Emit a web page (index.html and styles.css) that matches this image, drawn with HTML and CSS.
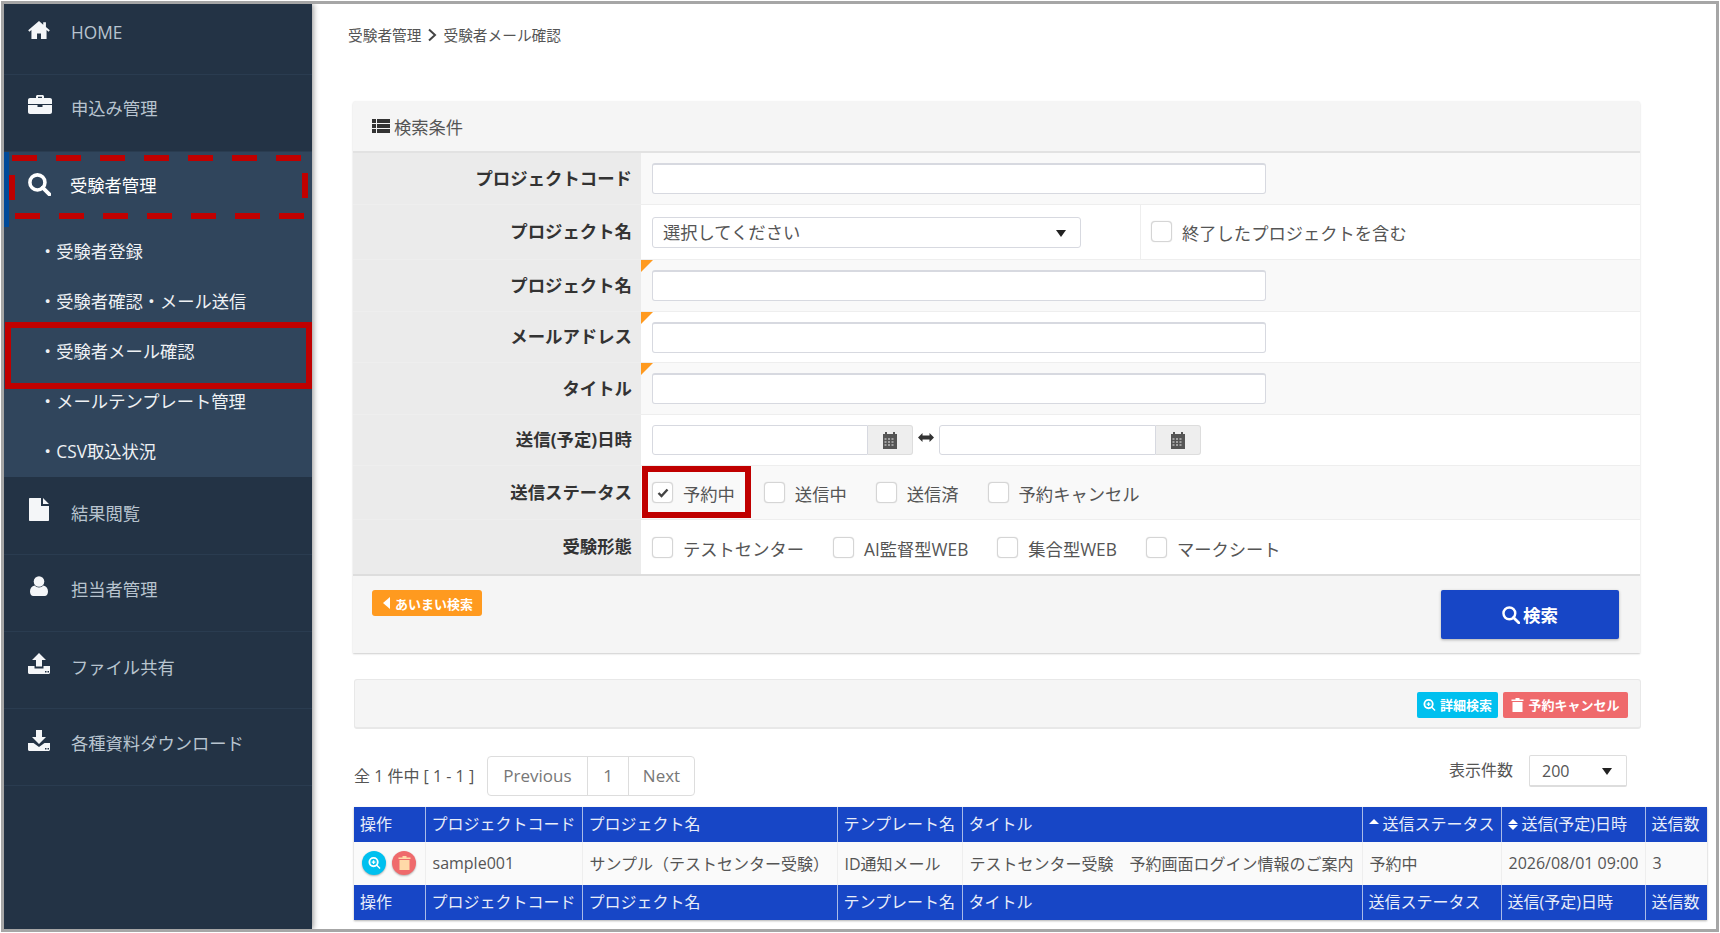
FILE: index.html
```html
<!DOCTYPE html>
<html lang="ja">
<head>
  <meta charset="UTF-8" />
  <title>受験者メール確認</title>
  <link rel="stylesheet" href="styles.css">
</head>
<body>
<div class="frame">
  <aside class="sidebar">
    <a class="nav-item nav-home">
      <svg class="nav-icon icon-home" viewBox="0 0 24 20"><path d="M12 0 0 10.4l1.3 1.5L3.600 10v10h6.200v-6h4.400v6h6.200V10l2.300 1.900 1.300-1.500-4.300-3.700V1.500h-3v2.700z"/></svg>
      <span>HOME</span>
    </a>
    <a class="nav-item">
      <svg class="nav-icon icon-case" viewBox="0 0 24 19"><path fill-rule="evenodd" d="M8 3V1.500C8 .7 8.700 0 9.500 0h5c.8 0 1.500.7 1.500 1.500V3h6c1.100 0 2 .9 2 2v4H0V5c0-1.100.9-2 2-2zm2-1.200V3h4V1.800z"/><path d="M0 10h9.500v2h5v-2H24v7c0 1.100-.9 2-2 2H2c-1.100 0-2-.9-2-2z"/></svg>
      <span>申込み管理</span>
    </a>
    <div class="nav-section">
      <a class="nav-item nav-active">
        <svg class="nav-icon icon-search" viewBox="0 0 22 22"><circle cx="9" cy="9" r="7.200" fill="none" stroke="#fff" stroke-width="3.400"/><path d="m14 14 6.500 6.500" stroke="#fff" stroke-width="3.600" stroke-linecap="round"/></svg>
        <span>受験者管理</span>
        <svg class="dash-box" width="299" height="64"><rect x="3" y="3" width="293" height="58" fill="none" stroke="#c00000" stroke-width="6" stroke-dasharray="25 19" shape-rendering="crispEdges"/></svg>
      </a>
      <a class="sub-item">・受験者登録</a>
      <a class="sub-item">・受験者確認・メール送信</a>
      <a class="sub-item sub-marked">・受験者メール確認</a>
      <a class="sub-item">・メールテンプレート管理</a>
      <a class="sub-item">・CSV取込状況</a>
    </div>
    <a class="nav-item nav-result">
      <svg class="nav-icon icon-file" viewBox="0 0 20 23"><path d="M1 0h11v8h8v14c0 .6-.4 1-1 1H1c-.6 0-1-.4-1-1V1c0-.6.4-1 1-1zM14 0l6 6h-6z"/></svg>
      <span>結果閲覧</span>
    </a>
    <a class="nav-item nav-staff">
      <svg class="nav-icon icon-user" viewBox="0 0 18 20"><circle cx="9" cy="5.500" r="5.300"/><path d="M0 15.500c0-3.500 1.800-5.500 4.600-6 1.100 1.300 2.700 2 4.400 2s3.300-.7 4.400-2c2.800.5 4.600 2.500 4.600 6 0 2.700-1.200 4.500-3.400 4.500H3.400C1.200 20 0 18.200 0 15.500z"/></svg>
      <span>担当者管理</span>
    </a>
    <a class="nav-item nav-share">
      <svg class="nav-icon icon-tray" viewBox="0 0 22 21"><path d="m11 0 7 7h-4v6.500H8V7H4z"/><path fill-rule="evenodd" d="M0 13h6.500v2.500h9V13H22v6.500c0 .8-.7 1.500-1.500 1.500h-19C.7 21 0 20.300 0 19.500zm17 5v1.500h1.500V18zm2.500 0v1.500H21V18z"/></svg>
      <span>ファイル共有</span>
    </a>
    <a class="nav-item nav-staff">
      <svg class="nav-icon icon-tray" viewBox="0 0 22 21"><path d="M8 0h6v7h4l-7 7-7-7h4z"/><path fill-rule="evenodd" d="M0 13h5.500L11 17l5.500-4H22v6.500c0 .8-.7 1.500-1.500 1.500h-19C.7 21 0 20.300 0 19.500zm17 5v1.500h1.500V18zm2.500 0v1.500H21V18z"/></svg>
      <span>各種資料ダウンロード</span>
    </a>
  </aside>

  <main class="content">
    <div class="crumbs">
      <span>受験者管理</span>
      <svg class="crumb-sep" viewBox="0 0 10 14"><path d="m2 1.500 6 5.500-6 5.500" fill="none" stroke="#444" stroke-width="2"/></svg>
      <span>受験者メール確認</span>
    </div>

    <section class="panel">
      <div class="panel-head">
        <svg class="list-icon" viewBox="0 0 18 14"><path d="M0 0h4v4H0zm5 0h13v4H5zM0 5h4v4H0zm5 0h13v4H5zM0 10h4v4H0zm5 0h13v4H5z"/></svg>
        <span>検索条件</span>
      </div>

      <div class="form-row row-a">
        <div class="form-label">プロジェクトコード</div>
        <div class="form-cell"><div class="text-input"></div></div>
      </div>
      <div class="form-row row-b">
        <div class="form-label">プロジェクト名</div>
        <div class="form-cell cell-select">
          <div class="select-box">選択してください<i class="caret"></i></div>
        </div>
        <div class="form-cell cell-side">
          <label class="check"><i class="box"></i>終了したプロジェクトを含む</label>
        </div>
      </div>
      <div class="form-row row-c">
        <div class="form-label">プロジェクト名</div>
        <div class="form-cell cell-fuzzy"><div class="text-input"></div></div>
      </div>
      <div class="form-row row-d">
        <div class="form-label">メールアドレス</div>
        <div class="form-cell cell-fuzzy"><div class="text-input"></div></div>
      </div>
      <div class="form-row row-c">
        <div class="form-label">タイトル</div>
        <div class="form-cell cell-fuzzy"><div class="text-input"></div></div>
      </div>
      <div class="form-row row-d">
        <div class="form-label">送信(予定)日時</div>
        <div class="form-cell">
          <div class="date-input"></div>
          <div class="date-addon"><svg class="cal-icon" viewBox="0 0 14 17"><path fill-rule="evenodd" d="M2 0h2v2h6V0h2v2h2v15H0V2h2zM1.500 6.500v1h2v-1zm3.500 0v1h2v-1zm3.500 0v1h2v-1zM1.500 9.500v1h2v-1zm3.500 0v1h2v-1zm3.500 0v1h2v-1zM1.500 12.500v1h2v-1zm3.500 0v1h2v-1zm3.500 0v1h2v-1z"/></svg></div>
          <svg class="range-icon" viewBox="0 0 16 9"><path d="M0 4.500 4.500 0v2.500h7V0L16 4.500 11.500 9V6.500h-7V9z"/></svg>
          <div class="date-input date-end"></div>
          <div class="date-addon"><svg class="cal-icon" viewBox="0 0 14 17"><path fill-rule="evenodd" d="M2 0h2v2h6V0h2v2h2v15H0V2h2zM1.500 6.500v1h2v-1zm3.500 0v1h2v-1zm3.500 0v1h2v-1zM1.500 9.500v1h2v-1zm3.500 0v1h2v-1zm3.500 0v1h2v-1zM1.500 12.500v1h2v-1zm3.500 0v1h2v-1zm3.500 0v1h2v-1z"/></svg></div>
        </div>
      </div>
      <div class="form-row row-status">
        <div class="form-label">送信ステータス</div>
        <div class="form-cell checks">
          <label class="check check-marked"><i class="box"><svg class="tick" viewBox="0 0 12 10"><path d="m1.500 5 3 3 6-6.500" fill="none" stroke="#444" stroke-width="2.400"/></svg></i>予約中</label>
          <label class="check"><i class="box"></i>送信中</label>
          <label class="check"><i class="box"></i>送信済</label>
          <label class="check"><i class="box"></i>予約キャンセル</label>
        </div>
      </div>
      <div class="form-row row-type">
        <div class="form-label">受験形態</div>
        <div class="form-cell checks">
          <label class="check"><i class="box"></i>テストセンター</label>
          <label class="check"><i class="box"></i>AI監督型WEB</label>
          <label class="check"><i class="box"></i>集合型WEB</label>
          <label class="check"><i class="box"></i>マークシート</label>
        </div>
      </div>

      <div class="panel-foot">
        <a class="btn-fuzzy"><i class="left-caret"></i>あいまい検索</a>
        <a class="btn-search">
          <svg class="btn-search-icon" viewBox="0 0 22 22"><circle cx="9" cy="9" r="7.200" fill="none" stroke="#fff" stroke-width="3"/><path d="m14 14 6.500 6.500" stroke="#fff" stroke-width="3.400" stroke-linecap="round"/></svg>
          検索
        </a>
      </div>
    </section>

    <div class="action-bar">
      <a class="btn-small btn-info">
        <svg class="small-icon" viewBox="0 0 14 14"><circle cx="6" cy="6" r="4.500" fill="none" stroke="#fff" stroke-width="2"/><path d="m9.500 9.500 3.500 3.500M4 6h4M6 4v4" stroke="#fff" stroke-width="1.500"/></svg>
        詳細検索
      </a>
      <a class="btn-small btn-danger">
        <svg class="small-icon" viewBox="0 0 12 14"><path d="M4 0h4v1.500h4V3H0V1.500h4zM1 4h10v10H1z" fill="#fff"/></svg>
        予約キャンセル
      </a>
    </div>

    <div class="list-tools">
      <div class="list-count">全 1 件中 [ 1 - 1 ]</div>
      <div class="pager">
        <a class="pager-prev">Previous</a>
        <a class="pager-num">1</a>
        <a class="pager-next">Next</a>
      </div>
      <div class="per-page">表示件数</div>
      <div class="per-select">200<i class="caret"></i></div>
    </div>

    <table class="result">
      <colgroup>
        <col class="c-op"><col class="c-code"><col class="c-name"><col class="c-tpl"><col class="c-title"><col class="c-status"><col class="c-date"><col class="c-count">
      </colgroup>
      <thead>
        <tr>
          <th>操作</th>
          <th>プロジェクトコード</th>
          <th>プロジェクト名</th>
          <th>テンプレート名</th>
          <th>タイトル</th>
          <th class="sorted"><i class="sort-up"></i>送信ステータス</th>
          <th class="sorted"><i class="sort-both"></i>送信(予定)日時</th>
          <th>送信数</th>
        </tr>
      </thead>
      <tbody>
        <tr>
          <td class="op-cell">
            <a class="round-btn round-info"><svg viewBox="0 0 14 14"><circle cx="6" cy="6" r="4.500" fill="none" stroke="#fff" stroke-width="2"/><path d="m9.500 9.500 3.500 3.500M4 6h4M6 4v4" stroke="#fff" stroke-width="1.500"/></svg></a>
            <a class="round-btn round-danger"><svg viewBox="0 0 12 14"><path d="M4 0h4v1.500h4V3H0V1.500h4zM1 4h10v10H1z" fill="#ffd9a8"/></svg></a>
          </td>
          <td>sample001</td>
          <td>サンプル（テストセンター受験）</td>
          <td>ID通知メール</td>
          <td>テストセンター受験　予約画面ログイン情報のご案内</td>
          <td>予約中</td>
          <td>2026/08/01 09:00</td>
          <td>3</td>
        </tr>
      </tbody>
      <tfoot>
        <tr>
          <th>操作</th>
          <th>プロジェクトコード</th>
          <th>プロジェクト名</th>
          <th>テンプレート名</th>
          <th>タイトル</th>
          <th>送信ステータス</th>
          <th>送信(予定)日時</th>
          <th>送信数</th>
        </tr>
      </tfoot>
    </table>
  </main>
</div>
</body>
</html>
```

FILE: styles.css
```css
* {
  box-sizing: border-box;
}
html, body {
  height: 100%;
}
body {
  margin: 0;
  padding: 1px;
  background: #fff;
  color: #555;
  font-family: "Open Sans", "Noto Sans CJK JP", sans-serif;
  font-size: 17.300px;
  overflow: hidden;
}
i {
  font-style: normal;
}
.frame {
  display: flex;
  height: 931px;
  border: 3px solid #a6a6a6;
  overflow: hidden;
  background: #fff;
}

/* sidebar */
.sidebar {
  flex: 0 0 308px;
  background: #233345;
  box-shadow: 1px 0 6px rgba(0,0,0,0.45);
  color: #b8c4cf;
  z-index: 2;
}
.nav-item {
  position: relative;
  display: flex;
  align-items: flex-start;
  height: 77px;
  padding: 21px 0 0 24px;
  border-bottom: 1px solid #2a3c50;
  line-height: 26px;
}
.nav-item span {
  position: absolute;
  left: 67px;
  top: 21px;
}
.nav-home {
  height: 71px;
  padding-top: 17px;
}
.nav-home span {
  top: 16px;
}
.nav-result {
  height: 78px;
}
.nav-result span {
  top: 24px;
}
.nav-staff span {
  top: 22px;
}
.nav-share span {
  top: 23px;
}
.nav-icon {
  display: block;
  fill: #f4f6f8;
}
.icon-home {
  width: 22px;
  height: 18px;
}
.icon-case {
  width: 24px;
  height: 19px;
  margin-top: -1px;
}
.icon-search {
  width: 23px;
  height: 23px;
}
.icon-file {
  width: 20px;
  height: 23px;
  margin-left: 1px;
}
.icon-user {
  width: 18px;
  height: 20px;
  margin-left: 2px;
}
.icon-tray {
  width: 22px;
  height: 21px;
}
.nav-section {
  background: #30455c;
}
.nav-active {
  height: 75px;
  border-bottom: 0;
  color: #fff;
}
.nav-active span {
  left: 66px;
}
.nav-active::before {
  content: "";
  position: absolute;
  left: 0;
  top: 0;
  bottom: 0;
  width: 5px;
  background: #004a99;
}
.dash-box {
  position: absolute;
  left: 5px;
  top: 3px;
}
.sub-item {
  position: relative;
  display: block;
  height: 50px;
  padding-left: 35px;
  line-height: 50px;
  color: #eef1f4;
}
.sub-marked::after {
  content: "";
  position: absolute;
  left: 1px;
  right: 0;
  top: -5px;
  bottom: -12px;
  border: 6px solid #c00000;
}

/* main */
.content {
  flex: 1;
  padding: 0 9px 0 36px;
  min-width: 0;
}
.crumbs {
  display: flex;
  align-items: center;
  gap: 6px;
  height: 97px;
  padding-bottom: 36px;
  font-size: 14.700px;
  color: #555;
}
.crumb-sep {
  width: 10px;
  height: 14px;
}
.panel {
  width: 1287px;
  margin-left: 5px;
  background: #f5f5f5;
  box-shadow: 0 1px 2px rgba(0,0,0,0.2);
  border-radius: 3px 3px 0 0;
}
.panel-head {
  display: flex;
  align-items: center;
  gap: 4px;
  height: 52px;
  padding-left: 19px;
  border-bottom: 2px solid #e2e2e2;
  color: #555;
}
.list-icon {
  width: 18px;
  height: 14px;
  fill: #333;
}
.form-row {
  display: flex;
  border-bottom: 1px solid #eee;
  background: #fff;
}
.row-a {
  height: 52px;
  background: #f9f9f9;
}
.row-b {
  height: 55px;
}
.row-c {
  height: 52px;
  background: #f9f9f9;
}
.row-d {
  height: 51px;
}
.row-status {
  height: 54px;
  background: #f9f9f9;
}
.row-type {
  height: 56px;
  border-bottom: 2px solid #ddd;
}
.form-label {
  flex: 0 0 288px;
  display: flex;
  align-items: center;
  justify-content: flex-end;
  padding: 0 9px 3px 0;
  background: #ebebeb;
  color: #333;
  font-size: 17.400px;
  font-weight: 700;
}
.form-cell {
  position: relative;
  display: flex;
  align-items: center;
  flex: 1;
  padding-left: 11px;
}
.cell-fuzzy::before {
  content: "";
  position: absolute;
  left: 0;
  top: 0;
  border-top: 12px solid #ff9a1f;
  border-right: 12px solid transparent;
}
.text-input {
  width: 614px;
  height: 31px;
  background: #fff;
  border: 1px solid #d7d9e0;
  border-top-width: 2px;
  border-radius: 3px;
}
.cell-select {
  flex: 0 0 499px;
}
.select-box {
  position: relative;
  width: 429px;
  height: 31px;
  padding-left: 10px;
  line-height: 30px;
  background: #fff;
  border: 1px solid #d7d9e0;
  border-radius: 3px;
}
.caret {
  position: absolute;
  right: 14px;
  top: 12px;
  border-top: 7px solid #222;
  border-left: 5px solid transparent;
  border-right: 5px solid transparent;
}
.cell-side {
  padding-left: 10px;
  border-left: 1px solid #eee;
}
.date-input {
  width: 216px;
  height: 30px;
  background: #fff;
  border: 1px solid #d7d9e0;
  border-radius: 3px 0 0 3px;
}
.date-end {
  width: 217px;
}
.date-addon {
  display: flex;
  align-items: center;
  justify-content: center;
  width: 45px;
  height: 30px;
  background: #eee;
  border: 1px solid #ddd;
  border-left: 0;
  border-radius: 0 3px 3px 0;
}
.cal-icon {
  width: 14px;
  height: 17px;
  fill: #555;
}
.range-icon {
  width: 16px;
  height: 9px;
  margin: -6px 5px 0;
  fill: #333;
}
.checks {
  gap: 29px;
  padding-top: 2px;
}
.check {
  position: relative;
  display: flex;
  align-items: center;
  gap: 10px;
  color: #555;
  white-space: nowrap;
}
.box {
  display: flex;
  align-items: center;
  justify-content: center;
  width: 21px;
  height: 21px;
  margin-top: -2px;
  background: #fff;
  border: 1px solid #d5d5d5;
  border-radius: 4px;
  box-shadow: 0 0 1px #ccc;
}
.tick {
  width: 12px;
  height: 10px;
}
.check-marked::after {
  content: "";
  position: absolute;
  left: -10px;
  right: -16px;
  top: -15px;
  bottom: -12px;
  border: 6px solid #c00000;
}
.panel-foot {
  display: flex;
  justify-content: space-between;
  align-items: flex-start;
  height: 77px;
  padding: 14px 21px 0 19px;
}
.btn-fuzzy {
  display: flex;
  align-items: center;
  gap: 5px;
  width: 110px;
  height: 26px;
  padding-left: 11px;
  background: #ff9a1f;
  border-radius: 3px;
  color: #fff;
  font-size: 13px;
  font-weight: 700;
}
.left-caret {
  border-right: 7px solid #fff;
  border-top: 6px solid transparent;
  border-bottom: 6px solid transparent;
}
.btn-search {
  display: flex;
  align-items: center;
  justify-content: center;
  gap: 3px;
  width: 178px;
  height: 49px;
  background: #1746c6;
  border-radius: 2px;
  box-shadow: 0 1px 3px rgba(0,0,0,0.3);
  color: #fff;
  font-size: 17.500px;
  font-weight: 700;
}
.btn-search-icon {
  width: 18px;
  height: 18px;
}
.action-bar {
  display: flex;
  justify-content: flex-end;
  align-items: center;
  gap: 5px;
  width: 1287px;
  height: 50px;
  margin: 26px 0 0 6px;
  padding: 2px 12px 0 0;
  background: #f5f5f5;
  border: 1px solid #e8e8e8;
  border-bottom-width: 2px;
  border-radius: 3px;
}
.btn-small {
  display: flex;
  align-items: center;
  justify-content: center;
  gap: 3px;
  height: 26px;
  border-radius: 2px;
  color: #fff;
  font-size: 13px;
  font-weight: 700;
}
.btn-info {
  width: 81px;
  background: #00c0ef;
}
.btn-danger {
  width: 125px;
  background: #ef6a6c;
}
.small-icon {
  width: 13px;
  height: 14px;
  margin-right: 1px;
}
.list-tools {
  position: relative;
  display: flex;
  align-items: center;
  width: 1353px;
  height: 40px;
  margin: 27px 0 0 6px;
}
.list-count {
  width: 133px;
  margin-top: -3px;
  font-size: 16px;
  color: #555;
}
.pager {
  display: flex;
  height: 40px;
  border: 1px solid #ddd;
  border-radius: 4px;
  color: #777;
  font-size: 17px;
  line-height: 38px;
}
.pager a {
  text-align: center;
}
.pager-prev {
  width: 99px;
}
.pager-num {
  width: 41px;
  border-left: 1px solid #ddd;
}
.pager-next {
  width: 66px;
  border-left: 1px solid #ddd;
}
.per-page {
  margin-left: auto;
  margin-top: -15px;
  font-size: 16px;
}
.per-select {
  position: relative;
  width: 98px;
  height: 32px;
  margin: -11px 80px 0 16px;
  padding-left: 12px;
  line-height: 30px;
  font-size: 16px;
  border: 1px solid #ddd;
  border-bottom-width: 2px;
  border-radius: 2px;
}
.result {
  width: 1353px;
  margin: 11px 0 0 6px;
  border-collapse: collapse;
  table-layout: fixed;
  font-size: 16px;
  box-shadow: 0 1px 2px rgba(0,0,0,0.3);
}
.c-op { width: 71px; }
.c-code { width: 157px; }
.c-name { width: 255px; }
.c-tpl { width: 125px; }
.c-title { width: 400px; }
.c-status { width: 139px; }
.c-date { width: 144px; }
.c-count { width: 62px; }
.result th {
  height: 35px;
  padding: 0 0 3px 6px;
  background: #1746c6;
  border-left: 1px solid #a9bbe8;
  color: #e8edf9;
  font-weight: 400;
  text-align: left;
  white-space: nowrap;
}
.result th:first-child {
  border-left: 0;
}
.result td {
  height: 43px;
  padding: 0 0 2px 7px;
  background: #fafafa;
  border-left: 1px solid #eee;
  white-space: nowrap;
}
.result td:first-child {
  border-left: 0;
}
.result .op-cell {
  padding-left: 8px;
}
.round-btn {
  display: inline-flex;
  align-items: center;
  justify-content: center;
  width: 24px;
  height: 24px;
  margin-right: 2px;
  border-radius: 50%;
  vertical-align: middle;
  box-shadow: 0 1px 2px rgba(0,0,0,0.3);
}
.round-btn svg {
  width: 13px;
  height: 14px;
}
.round-info {
  background: #00c0ef;
}
.round-danger {
  background: #ef6a6c;
}
.sort-up, .sort-both {
  display: inline-block;
  position: relative;
  width: 10px;
  height: 12px;
  margin-right: 4px;
}
.sort-up::before, .sort-both::before {
  content: "";
  position: absolute;
  left: 0;
  top: 1px;
  border-bottom: 5px solid #fff;
  border-left: 5px solid transparent;
  border-right: 5px solid transparent;
}
.sort-both::after {
  content: "";
  position: absolute;
  left: 0;
  top: 7px;
  border-top: 5px solid #fff;
  border-left: 5px solid transparent;
  border-right: 5px solid transparent;
}
```
